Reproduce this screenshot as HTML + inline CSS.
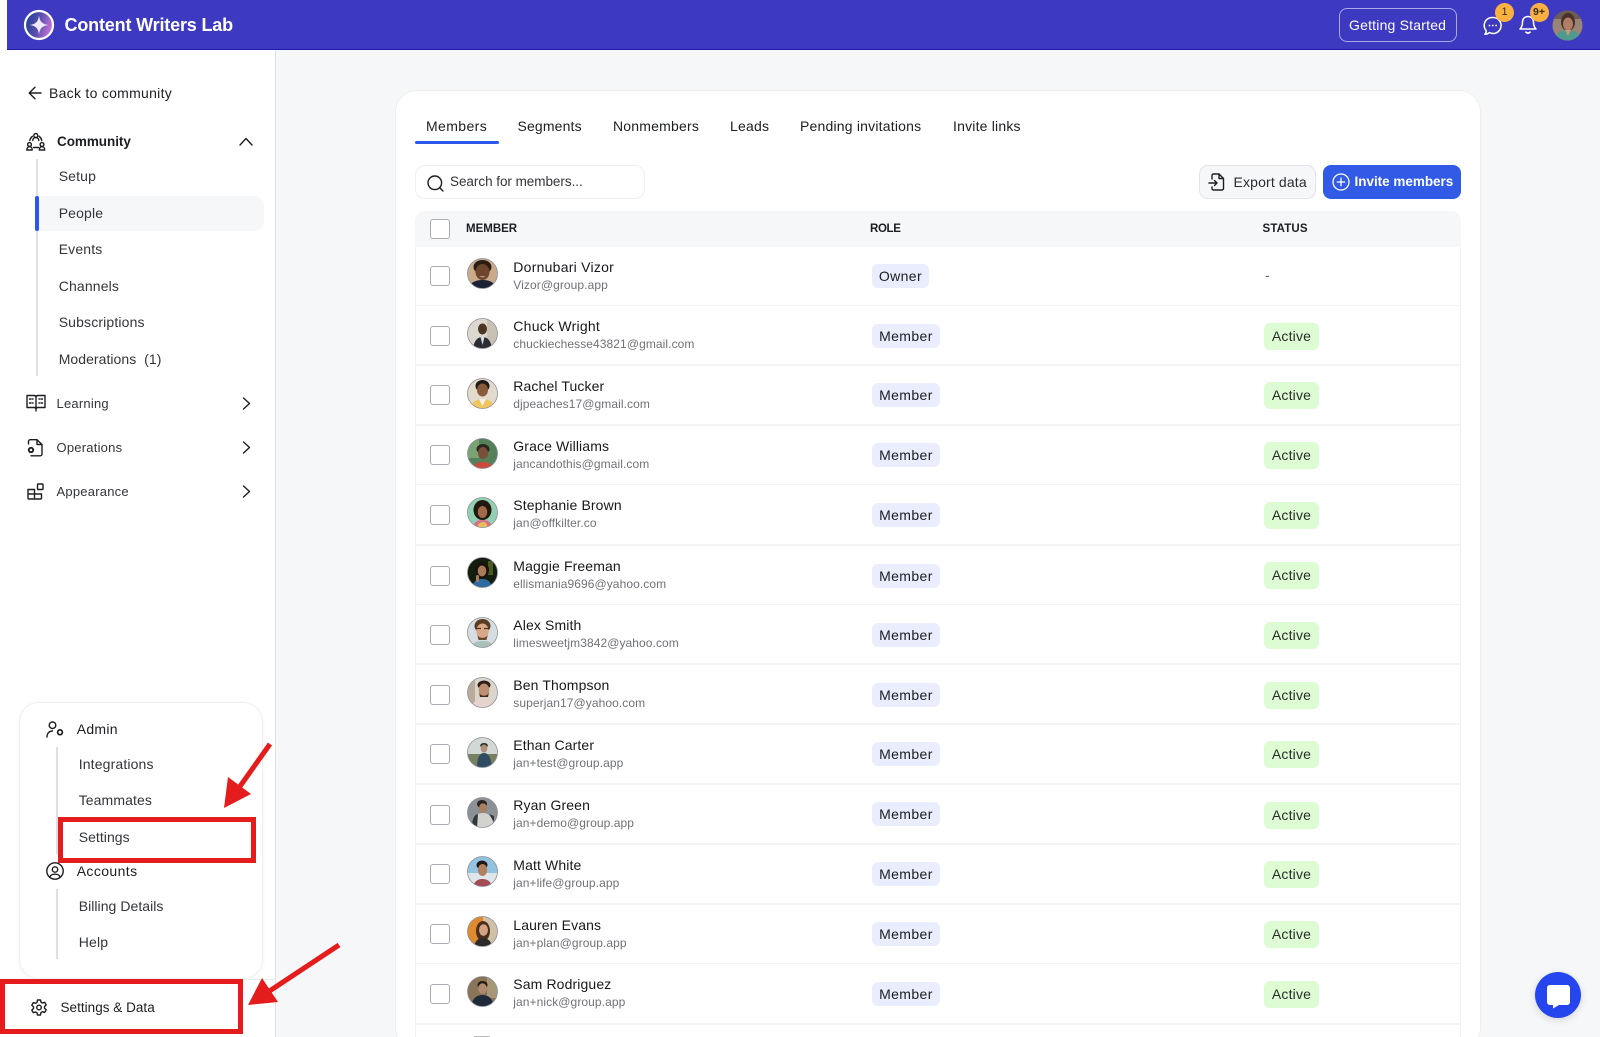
<!DOCTYPE html>
<html><head><meta charset="utf-8"><title>Content Writers Lab</title>
<style>
html,body{margin:0;padding:0;width:1600px;height:1037px;overflow:hidden;background:#f6f7f9;font-family:"Liberation Sans",sans-serif;color:#1d1e22}
*{box-sizing:border-box}
#w{position:relative;width:1600px;height:1037px;overflow:hidden;background:#f6f7f9}
.a,.t{position:absolute}
.t{white-space:nowrap;line-height:20px;height:20px;font-size:14px;letter-spacing:.2px}
.s{color:#33353a;letter-spacing:.15px}
.m{font-size:13px;letter-spacing:.22px;left:56.5px}
.b{font-weight:700}
svg{position:absolute;overflow:visible}
.ic{fill:none;stroke:#1d1e22;stroke-width:1.4;stroke-linecap:round;stroke-linejoin:round}
.r{position:absolute;left:415px;width:1046px;background:#fff;border-left:1px solid #f0f1f3;border-right:1px solid #f0f1f3;border-bottom:2px solid #f3f4f6;margin:0}
.cb{position:absolute;left:14px;top:20px;width:20px;height:20px;border:1.5px solid #a9abaf;border-radius:3px;background:#fff}
.av{left:50.5px;top:12px;width:31px;height:31px}
.n{left:97.3px;top:10px;letter-spacing:.12px;color:#17181b}
.e{left:97.3px;top:28px;font-size:12px;letter-spacing:.08px;color:#707278}
.ro{position:absolute;left:455.7px;top:18px;height:24px;border-radius:6px;background:#e9edfd;font-size:14px;line-height:24px;text-align:center;letter-spacing:.4px;color:#1d1e22}
.st{position:absolute;left:848px;top:17px;width:55px;height:27px;border-radius:6px;background:#ddfcd3;font-size:14px;line-height:27px;text-align:center;letter-spacing:.2px;color:#2a2d2a}
.u .cb{top:19px}
.u .ro{top:17px}
.u .st{top:16px}
.u .av{top:11.5px}
.h .st{top:16.5px}
.h .av{top:11.5px}
</style></head><body><div id="w">
<svg width="0" height="0"><defs><clipPath id="c"><circle cx="15.5" cy="15.5" r="15"/></clipPath>
<linearGradient id="lg" x1="0" y1="0.3" x2="1" y2="0.6"><stop offset="0" stop-color="#1f3f95"/><stop offset=".5" stop-color="#5a4fb0"/><stop offset="1" stop-color="#cf78dc"/></linearGradient></defs></svg>

<!-- top bar -->
<div class="a" style="left:0;top:0;width:7px;height:50px;background:#fff"></div>
<div class="a" style="left:7px;top:0;width:1593px;height:50px;background:#3d39c1;border-bottom:1px solid #1e1ca6"></div>
<svg style="left:24px;top:10px" width="30" height="30" viewBox="0 0 30 30"><circle cx="15" cy="15" r="14" fill="url(#lg)" stroke="#fff" stroke-width="2.2"/><path d="M15 5.500C15.800 11.800 18.200 14.200 24.500 15 18.200 15.800 15.800 18.200 15 24.500 14.200 18.200 11.800 15.800 5.500 15 11.800 14.200 14.200 11.800 15 5.500Z" fill="#efeafa"/></svg>
<div class="t b" style="left:64.500px;top:15px;font-size:18px;color:#fff;letter-spacing:-.17px">Content Writers Lab</div>
<div class="a" style="left:1338.500px;top:8px;width:118px;height:34px;border:1px solid #a9a8e8;border-radius:8px"></div>
<div class="t" style="left:1349px;top:15px;color:#fff;letter-spacing:.2px;font-size:14px">Getting Started</div>
<svg style="left:1482px;top:15px" width="22" height="22" viewBox="0 0 22 22"><path d="M11 2.500a8 8 0 1 1-3.600 15.100C6 18.900 4.500 19.300 2.800 19.200c1-.8 1.500-2 1.400-3.400A8 8 0 0 1 11 2.500Z" fill="none" stroke="#fff" stroke-width="1.500" stroke-linejoin="round"/><circle cx="7.500" cy="10.500" r=".9" fill="#fff"/><circle cx="10.800" cy="10.500" r=".9" fill="#fff"/><circle cx="14.100" cy="10.500" r=".9" fill="#fff"/></svg>
<div class="a" style="left:1495px;top:2.500px;width:19px;height:19px;border-radius:50%;background:#fcb040;color:#3a2c14;font-size:11px;line-height:19px;text-align:center">1</div>
<svg style="left:1519px;top:15px" width="18" height="20" viewBox="0 0 18 20"><path d="M9 1.500c-3.500 0-5.500 2.500-5.500 5.500 0 4-1 5.500-2.500 7h16c-1.500-1.500-2.500-3-2.500-7 0-3-2-5.500-5.500-5.500Z" fill="none" stroke="#fff" stroke-width="1.500" stroke-linejoin="round"/><path d="M7 17.200c1.200 1 2.800 1 4 0" fill="none" stroke="#fff" stroke-width="1.800" stroke-linecap="round"/></svg>
<div class="a" style="left:1529.500px;top:2.500px;width:19px;height:19px;border-radius:50%;background:#fcb040;color:#3a2c14;font-size:10.500px;line-height:19px;text-align:center;font-weight:700">9+</div>
<svg style="left:1552px;top:9.500px" width="31" height="31"><g clip-path="url(#c)"><rect width="31" height="31" fill="#9a8478"/><rect width="31" height="9" fill="#6e5c54"/><ellipse cx="16" cy="12" rx="7" ry="9" fill="#4a3128"/><ellipse cx="16" cy="14" rx="5" ry="6.500" fill="#b17f66"/><path d="M3 31c0-8 6-11 13-11s12 3 12 11Z" fill="#4e9b8c"/><path d="M13 20l3 6 3-6Z" fill="#c89880"/></g></svg>

<!-- sidebar -->
<div class="a" style="left:0;top:50px;width:276px;height:987px;background:#fff;border-right:1px solid #e2e3e6"></div>
<svg class="ic" style="left:28px;top:86px" width="14" height="14" viewBox="0 0 14 14" stroke-width="1.300"><path d="M13 7H1.500M7 1.200 1.200 7 7 12.800"/></svg>
<div class="t" style="left:49px;top:82.500px;letter-spacing:.28px">Back to community</div>

<svg class="ic" style="left:26px;top:132px" width="20" height="20" viewBox="0 0 20 20" stroke-width="1.100"><circle cx="9.800" cy="3.500" r="2"/><path d="M6.800 8.500c0-2 1.300-3 3-3s3 1 3 3M3.800 8.500c.3-1.800 1.200-3 2.600-4.200M15.800 8.500c-.3-1.800-1.200-3-2.600-4.200"/><circle cx="3.500" cy="12.500" r="1.900"/><circle cx="16" cy="12.500" r="1.900"/><path d="M.8 18c0-2 1.200-3.300 2.700-3.300S6.200 16 6.200 18ZM13.300 18c0-2 1.200-3.300 2.700-3.300s2.700 1.300 2.700 3.300ZM7.500 15.500h5"/></svg>
<div class="t b" style="left:57px;top:131.500px;font-size:13.500px;letter-spacing:-.05px">Community</div>
<svg class="ic" style="left:239px;top:137px" width="14" height="9" viewBox="0 0 14 9" stroke-width="1.300"><path d="M1 8 7 1.500 13 8"/></svg>

<div class="a" style="left:35.500px;top:159px;width:2px;height:217px;background:#e3dfdf"></div>
<div class="a" style="left:35px;top:196px;width:228.500px;height:34.500px;background:#f6f7f9;border-radius:4px 10px 10px 4px"></div>
<div class="a" style="left:35px;top:196px;width:4px;height:34.500px;background:#2a59ea;border-radius:2px"></div>
<div class="t s" style="left:58.700px;top:166px">Setup</div>
<div class="t s" style="left:58.700px;top:202.500px">People</div>
<div class="t s" style="left:58.700px;top:239px">Events</div>
<div class="t s" style="left:58.700px;top:275.500px">Channels</div>
<div class="t s" style="left:58.700px;top:312px">Subscriptions</div>
<div class="t s" style="left:58.700px;top:348.500px;letter-spacing:.05px">Moderations&nbsp;&nbsp;(1)</div>

<svg class="ic" style="left:26px;top:394px" width="20" height="18" viewBox="0 0 20 18" stroke-width="1.300"><path d="M1 1.500h7c1.200 0 2 .8 2 2v11.500c0-1-.8-1.500-2-1.500H1ZM19 1.500h-7c-1.200 0-2 .8-2 2v11.500c0-1 .8-1.500 2-1.500h7ZM3.500 5h1.500M3.500 9h1.500M6.500 5H7M6.500 9H7M13 5h.5M13 9h.5M15 5h1.500M15 9h1.500M10 15v2"/></svg>
<div class="t s m" style="top:394px">Learning</div>
<svg class="ic" style="left:242px;top:397px" width="9" height="13" viewBox="0 0 9 13" stroke-width="1.300"><path d="M1.500 1 7.500 6.500 1.500 12"/></svg>

<svg class="ic" style="left:26px;top:438px" width="18" height="19" viewBox="0 0 18 19" stroke-width="1.300"><path d="M2.500 6V3.500c0-1 .8-1.800 1.800-1.800h6.700L16 6.500v9.500c0 1-.8 1.800-1.800 1.800H5M11 1.700V6.500h5"/><circle cx="5" cy="12" r="2.200" stroke-width="1.900"/></svg>
<div class="t s m" style="top:438px">Operations</div>
<svg class="ic" style="left:242px;top:441px" width="9" height="13" viewBox="0 0 9 13" stroke-width="1.300"><path d="M1.500 1 7.500 6.500 1.500 12"/></svg>

<svg class="ic" style="left:27px;top:483px" width="17" height="17" viewBox="0 0 17 17" stroke-width="1.300"><path d="M1 6.500h6.500v9.500H2c-.6 0-1-.4-1-1ZM1 11h13M7.500 11v5h6c.6 0 1-.4 1-1v-4"/><rect x="10.500" y="1" width="5.500" height="5.500" rx=".8"/></svg>
<div class="t s m" style="top:482px">Appearance</div>
<svg class="ic" style="left:242px;top:485px" width="9" height="13" viewBox="0 0 9 13" stroke-width="1.300"><path d="M1.500 1 7.500 6.500 1.500 12"/></svg>

<!-- admin card -->
<div class="a" style="left:19px;top:702px;width:244px;height:277px;background:#fff;border:1px solid #f0f0f2;border-radius:20px;box-shadow:0 1px 4px rgba(0,0,0,.05)"></div>
<svg class="ic" style="left:46px;top:721px" width="19" height="17" viewBox="0 0 19 17" stroke-width="1.200"><circle cx="6.500" cy="4.200" r="3.300"/><path d="M1 16c0-3.500 2-6 5.500-6"/><circle cx="14" cy="11.300" r="2.400" stroke-width="1.700"/></svg>
<div class="t" style="left:76.700px;top:719px;letter-spacing:.3px">Admin</div>
<div class="a" style="left:55.500px;top:747px;width:2px;height:107px;background:#e3dfdf"></div>
<div class="t s" style="left:78.700px;top:753.500px">Integrations</div>
<div class="t s" style="left:78.700px;top:790px;letter-spacing:.1px">Teammates</div>
<div class="t s" style="left:78.700px;top:826.500px;letter-spacing:.05px">Settings</div>
<svg class="ic" style="left:46px;top:862px" width="18" height="18" viewBox="0 0 18 18" stroke-width="1.300"><circle cx="9" cy="9" r="8.200"/><circle cx="9" cy="7.500" r="2.700"/><path d="M3.800 15.500c.5-2.500 2.500-3.300 5.200-3.300s4.700.8 5.200 3.300"/></svg>
<div class="t" style="left:76.700px;top:861px;letter-spacing:.4px">Accounts</div>
<div class="a" style="left:55.500px;top:889px;width:2px;height:70px;background:#e3dfdf"></div>
<div class="t s" style="left:78.700px;top:896px;letter-spacing:.05px">Billing Details</div>
<div class="t s" style="left:78.700px;top:932px;letter-spacing:.2px">Help</div>

<div class="a" style="left:0;top:979px;width:276px;height:1px;background:#ececee"></div>
<svg class="ic" style="left:31px;top:999px" width="16" height="17" viewBox="0 0 16 17" stroke-width="1.300"><path d="M6.500 1h3l.5 2.200 1.500.8 2.200-.7 1.500 2.600-1.700 1.600v1.700l1.700 1.600-1.500 2.600-2.200-.7-1.500.8L9.500 16h-3L6 13.800l-1.500-.8-2.200.7L.8 11.100l1.700-1.600V7.800L.8 6.200l1.500-2.600 2.200.7L6 3.500Z"/><circle cx="8" cy="8.500" r="2.300"/></svg>
<div class="t" style="left:60.500px;top:997.500px;font-size:13.500px;letter-spacing:.03px">Settings &amp; Data</div>

<!-- main card -->
<div class="a" style="left:395px;top:90px;width:1086px;height:960px;background:#fff;border:1px solid #edeef0;border-radius:22px"></div>
<div class="t" style="left:426px;top:115.500px;letter-spacing:.4px">Members</div>
<div class="t" style="left:517.500px;top:115.500px;letter-spacing:.15px">Segments</div>
<div class="t" style="left:613px;top:115.500px">Nonmembers</div>
<div class="t" style="left:730px;top:115.500px">Leads</div>
<div class="t" style="left:800px;top:115.500px">Pending invitations</div>
<div class="t" style="left:953px;top:115.500px">Invite links</div>
<div class="a" style="left:414.500px;top:141px;width:84px;height:3px;background:#2a59ea;border-radius:2px"></div>

<div class="a" style="left:414.500px;top:164.500px;width:230.500px;height:34.500px;border:1px solid #eeeff1;border-radius:10px;background:#fff"></div>
<svg class="ic" style="left:427px;top:175px" width="17" height="17" viewBox="0 0 17 17" stroke-width="1.400"><circle cx="7.800" cy="7.800" r="6.800"/><path d="M12.800 12.800 16 16"/></svg>
<div class="t s" style="left:450px;top:172px;font-size:13.500px;letter-spacing:-.04px">Search for members...</div>

<div class="a" style="left:1198.500px;top:164.500px;width:117.500px;height:34.500px;background:#f6f7f9;border:1px solid #e3e4e8;border-radius:9px"></div>
<svg class="ic" style="left:1208px;top:173px" width="17" height="18" viewBox="0 0 17 18" stroke-width="1.300"><path d="M4 6V2.500c0-.8.600-1.500 1.500-1.500H11l4.500 4.500V15.500c0 .8-.6 1.500-1.500 1.500H5.500c-.9 0-1.500-.7-1.500-1.500V14M11 1v4.500h4.500M1 10h8M6.500 7.500 9 10l-2.500 2.500"/></svg>
<div class="t" style="left:1233.500px;top:172px;letter-spacing:.15px;color:#2a2c30">Export data</div>

<div class="a" style="left:1323px;top:164.500px;width:138px;height:34.500px;background:#315ae6;border-radius:8px"></div>
<svg style="left:1332px;top:173px" width="18" height="18" viewBox="0 0 18 18" fill="none" stroke="#fff" stroke-width="1.300" stroke-linecap="round"><circle cx="9" cy="9" r="8"/><path d="M9 5.200v7.600M5.200 9h7.600"/></svg>
<div class="t b" style="left:1354.500px;top:171.500px;color:#fff;font-size:13.500px;letter-spacing:-.02px">Invite members</div>

<!-- table head -->
<div class="a" style="left:415px;top:210.500px;width:1046px;height:36.500px;background:#f6f7f9;border-radius:10px 10px 0 0"></div>
<div class="a" style="left:430px;top:219px;width:20px;height:19.500px;border:1.500px solid #a9abaf;border-radius:3px;background:#fff"></div>
<div class="t b" style="left:466px;top:219px;font-size:11.500px;letter-spacing:0">MEMBER</div>
<div class="t b" style="left:870px;top:219px;font-size:11.500px;letter-spacing:-.35px">ROLE</div>
<div class="t b" style="left:1262.500px;top:219px;font-size:11.500px;letter-spacing:.15px">STATUS</div>

<!-- rows -->
<div class="r u" style="top:247px;height:60px"><div class="cb"></div>
<svg class="av" style="top:11px"><g clip-path="url(#c)"><rect width="31" height="31" fill="#c9ab8c"/><ellipse cx="15.500" cy="9" rx="9" ry="7" fill="#2b1d14"/><ellipse cx="15.500" cy="14" rx="7" ry="8" fill="#6d442c"/><path d="M11 17c2 3 7 3 9 0l-1.500 1.500h-6Z" fill="#eee"/><path d="M2 31c1-7 7-9 13.500-9S28 24 29 31Z" fill="#1c2233"/></g><circle cx="15.500" cy="15.500" r="15" fill="none" stroke="#8f8f99" stroke-width=".8"/></svg>
<div class="t n" style="top:9.500px;letter-spacing:.25px">Dornubari Vizor</div><div class="t e">Vizor@group.app</div><div class="ro" style="width:57.500px">Owner</div><div class="t" style="left:849px;top:18px;color:#666">-</div></div>

<div class="r" style="top:306px;height:60px"><div class="cb"></div>
<svg class="av"><g clip-path="url(#c)"><rect width="31" height="31" fill="#dcd8d0"/><rect x="20" width="11" height="31" fill="#c8c2b4"/><ellipse cx="15.500" cy="11" rx="4.500" ry="5.500" fill="#4e3426"/><path d="M6 31c1-9 5-12 9.500-12S24 22 25 31Z" fill="#2a2d33"/><path d="M13.500 19l2 8 2-8Z" fill="#d8dde4"/></g><circle cx="15.500" cy="15.500" r="15" fill="none" stroke="#8f8f99" stroke-width=".8"/></svg>
<div class="t n" style="letter-spacing:.25px">Chuck Wright</div><div class="t e">chuckiechesse43821@gmail.com</div><div class="ro" style="width:68.500px">Member</div><div class="st" style="top:16.500px">Active</div></div>

<div class="r u" style="top:366px;height:60px"><div class="cb"></div>
<svg class="av"><g clip-path="url(#c)"><rect width="31" height="31" fill="#e2dacd"/><ellipse cx="15.500" cy="8" rx="7" ry="6" fill="#1f1a17"/><ellipse cx="15.500" cy="12" rx="5.500" ry="6.500" fill="#8a5a3c"/><path d="M4 31c0-7 5-10 11.500-10S27 24 27 31Z" fill="#efc55c"/><path d="M12 21l3.500 7 3.500-7Z" fill="#f3f0ea"/></g><circle cx="15.500" cy="15.500" r="15" fill="none" stroke="#8f8f99" stroke-width=".8"/></svg>
<div class="t n">Rachel Tucker</div><div class="t e">djpeaches17@gmail.com</div><div class="ro" style="width:68.500px">Member</div><div class="st">Active</div></div>

<div class="r u" style="top:426px;height:59.500px"><div class="cb"></div>
<svg class="av"><g clip-path="url(#c)"><rect width="31" height="31" fill="#54805a"/><rect y="0" width="12" height="20" fill="#7ba273"/><ellipse cx="16" cy="11" rx="6.500" ry="5" fill="#2c241e"/><ellipse cx="16" cy="15" rx="5" ry="6" fill="#7a4e38"/><path d="M6 31c1-5 4-7 10-7s9 2 10 7Z" fill="#cc4a3a"/></g><circle cx="15.500" cy="15.500" r="15" fill="none" stroke="#8f8f99" stroke-width=".8"/></svg>
<div class="t n">Grace Williams</div><div class="t e">jancandothis@gmail.com</div><div class="ro" style="width:68.500px">Member</div><div class="st">Active</div></div>

<div class="r" style="top:485px;height:61px"><div class="cb"></div>
<svg class="av"><g clip-path="url(#c)"><rect width="31" height="31" fill="#91d0b1"/><ellipse cx="15.500" cy="13" rx="9" ry="10" fill="#21180f"/><ellipse cx="15.500" cy="15" rx="4.800" ry="6" fill="#a06a48"/><path d="M6 31c1-6 4-8 9.500-8s8.500 2 9.500 8Z" fill="#d96c8c"/><path d="M10 31c1-4 3-6 6-6s4 2 5 6Z" fill="#e8c05a"/></g><circle cx="15.500" cy="15.500" r="15" fill="none" stroke="#8f8f99" stroke-width=".8"/></svg>
<div class="t n">Stephanie Brown</div><div class="t e">jan@offkilter.co</div><div class="ro" style="width:68.500px">Member</div><div class="st">Active</div></div>

<div class="r h" style="top:545.500px;height:60px"><div class="cb"></div>
<svg class="av"><g clip-path="url(#c)"><rect width="31" height="31" fill="#131e0e"/><rect x="21" y="4" width="5" height="14" fill="#4a5a24"/><ellipse cx="15" cy="13" rx="7" ry="8" fill="#1a120c"/><ellipse cx="15" cy="14" rx="4.300" ry="5.500" fill="#a87a5a"/><path d="M5 31c1-7 5-9 10-9s9 2 10 9Z" fill="#2f6aa0"/><rect x="9" y="18" width="3" height="7" rx="1.500" fill="#a87a5a"/></g><circle cx="15.500" cy="15.500" r="15" fill="none" stroke="#8f8f99" stroke-width=".8"/></svg>
<div class="t n">Maggie Freeman</div><div class="t e">ellismania9696@yahoo.com</div><div class="ro" style="width:68.500px">Member</div><div class="st">Active</div></div>

<div class="r" style="top:605px;height:60px"><div class="cb"></div>
<svg class="av"><g clip-path="url(#c)"><rect width="31" height="31" fill="#d6dee3"/><ellipse cx="15.500" cy="9" rx="8" ry="7" fill="#5b3c20"/><ellipse cx="15.500" cy="14" rx="6.200" ry="7.500" fill="#d8a888"/><path d="M10 17c1 5 10 5 11 0l-1.500 6h-8Z" fill="#6a4a2c"/><path d="M8.500 11.500h5.500M17 11.500h5.500" stroke="#4a3420" stroke-width="1.200"/><path d="M4 31c1-5 5-7 11.500-7S26 26 27 31Z" fill="#a9c2b9"/></g><circle cx="15.500" cy="15.500" r="15" fill="none" stroke="#8f8f99" stroke-width=".8"/></svg>
<div class="t n">Alex Smith</div><div class="t e">limesweetjm3842@yahoo.com</div><div class="ro" style="width:68.500px">Member</div><div class="st">Active</div></div>

<div class="r" style="top:665px;height:60px"><div class="cb"></div>
<svg class="av"><g clip-path="url(#c)"><rect width="31" height="31" fill="#dbd5cb"/><rect width="8" height="31" fill="#b8ad9c"/><ellipse cx="17" cy="8" rx="6.500" ry="4.500" fill="#2a2018"/><ellipse cx="17" cy="13" rx="5.300" ry="6.500" fill="#c08e70"/><path d="M12 15c1 5 9 5 10 0l-1 5h-8Z" fill="#3a2a20"/><path d="M5 31c1-7 5-10 12-10s9 3 10 10Z" fill="#e6d3cc"/></g><circle cx="15.500" cy="15.500" r="15" fill="none" stroke="#8f8f99" stroke-width=".8"/></svg>
<div class="t n">Ben Thompson</div><div class="t e">superjan17@yahoo.com</div><div class="ro" style="width:68.500px">Member</div><div class="st">Active</div></div>

<div class="r u" style="top:725px;height:60px"><div class="cb"></div>
<svg class="av" style="top:12px"><g clip-path="url(#c)"><rect width="31" height="31" fill="#d2d8d4"/><rect y="17" width="31" height="14" fill="#77805f"/><ellipse cx="17" cy="8.500" rx="3.800" ry="2.500" fill="#2b2b28"/><ellipse cx="17" cy="11.500" rx="3.300" ry="4" fill="#b09078"/><path d="M10 31c0-11 3-15 7-15s7 4 8 15Z" fill="#2f4c62"/></g><circle cx="15.500" cy="15.500" r="15" fill="none" stroke="#8f8f99" stroke-width=".8"/></svg>
<div class="t n">Ethan Carter</div><div class="t e">jan+test@group.app</div><div class="ro" style="width:68.500px">Member</div><div class="st">Active</div></div>

<div class="r u" style="top:785px;height:60px"><div class="cb" style="top:20px"></div>
<svg class="av" style="top:12px"><g clip-path="url(#c)"><rect width="31" height="31" fill="#8b9195"/><ellipse cx="15" cy="7" rx="5" ry="4" fill="#2a2420"/><ellipse cx="16" cy="11" rx="4" ry="4.800" fill="#a87f62"/><path d="M5 31c0-10 4-15 11-15s10 5 11 15Z" fill="#d2d2ce"/><path d="M5 31c0-9 2-13 6-14l-1 14ZM27 25l-5-8 5 2Z" fill="#34373a"/></g><circle cx="15.500" cy="15.500" r="15" fill="none" stroke="#8f8f99" stroke-width=".8"/></svg>
<div class="t n">Ryan Green</div><div class="t e">jan+demo@group.app</div><div class="ro" style="width:68.500px">Member</div><div class="st" style="top:16.500px">Active</div></div>

<div class="r u" style="top:844.500px;height:60px"><div class="cb"></div>
<svg class="av"><g clip-path="url(#c)"><rect width="31" height="31" fill="#93c3de"/><rect y="17" width="31" height="14" fill="#dfe7ea"/><ellipse cx="15" cy="9" rx="5.500" ry="4.500" fill="#1f1a18"/><ellipse cx="15.500" cy="14" rx="4.700" ry="6" fill="#b08060"/><path d="M6 31c1-5 4-8 9.500-8s8.500 3 9.500 8Z" fill="#a34c54"/></g><circle cx="15.500" cy="15.500" r="15" fill="none" stroke="#8f8f99" stroke-width=".8"/></svg>
<div class="t n">Matt White</div><div class="t e">jan+life@group.app</div><div class="ro" style="width:68.500px">Member</div><div class="st" style="top:16.500px">Active</div></div>

<div class="r u" style="top:904.500px;height:60px"><div class="cb"></div>
<svg class="av"><g clip-path="url(#c)"><rect width="31" height="31" fill="#e08a30"/><rect x="16" width="15" height="31" fill="#cfc0a6"/><ellipse cx="16" cy="15" rx="7" ry="10" fill="#4a2e1c"/><ellipse cx="16.500" cy="14" rx="4.500" ry="5.800" fill="#d2a282"/><path d="M7 31c1-6 4-9 9-9s8 3 9 9Z" fill="#2c2a2a"/></g><circle cx="15.500" cy="15.500" r="15" fill="none" stroke="#8f8f99" stroke-width=".8"/></svg>
<div class="t n">Lauren Evans</div><div class="t e">jan+plan@group.app</div><div class="ro" style="width:68.500px">Member</div><div class="st" style="top:16.500px">Active</div></div>

<div class="r" style="top:964px;height:60.500px"><div class="cb"></div>
<svg class="av"><g clip-path="url(#c)"><rect width="31" height="31" fill="#8a7458"/><rect x="20" width="11" height="22" fill="#a89878"/><ellipse cx="15.500" cy="9" rx="5" ry="4" fill="#221a14"/><ellipse cx="15.500" cy="12.500" rx="4.300" ry="5.300" fill="#b08a70"/><path d="M4 31c1-8 5-12 11.500-12S26 23 27 31Z" fill="#1e2a3a"/></g><circle cx="15.500" cy="15.500" r="15" fill="none" stroke="#8f8f99" stroke-width=".8"/></svg>
<div class="t n">Sam Rodriguez</div><div class="t e">jan+nick@group.app</div><div class="ro" style="width:68.500px">Member</div><div class="st">Active</div></div>

<div class="r" style="top:1024.500px;height:60px;border-bottom:0"></div>
<div class="a" style="left:474px;top:1036px;width:16px;height:1px;background:#b8babf"></div>

<!-- annotations -->
<div class="a" style="left:58px;top:817px;width:198px;height:46px;border:5px solid #e41c1c"></div>
<div class="a" style="left:0;top:979px;width:243px;height:55px;border:5.500px solid #e41c1c"></div>
<svg style="left:0;top:0" width="1600" height="1037"><path d="M270 744 236 792" stroke="#e41c1c" stroke-width="5" fill="none"/><path d="M224 808 228 777 251 794Z" fill="#e41c1c"/><path d="M339 945 268 992" stroke="#e41c1c" stroke-width="5" fill="none"/><path d="M248 1005 262 978 278 1002Z" fill="#e41c1c"/></svg>

<!-- chat -->
<div class="a" style="left:1535px;top:972px;width:46px;height:46px;border-radius:50%;background:#2546ee;box-shadow:0 2px 8px rgba(0,0,0,.14)"></div>
<svg style="left:1547px;top:985px" width="23" height="24" viewBox="0 0 23 24"><path d="M3 0h17c1.700 0 3 1.300 3 3v14c0 1.700-1.300 3-3 3h-8l-6 3.500V20H3c-1.700 0-3-1.300-3-3V3c0-1.700 1.300-3 3-3Z" fill="#fff"/></svg>
</div></body></html>
